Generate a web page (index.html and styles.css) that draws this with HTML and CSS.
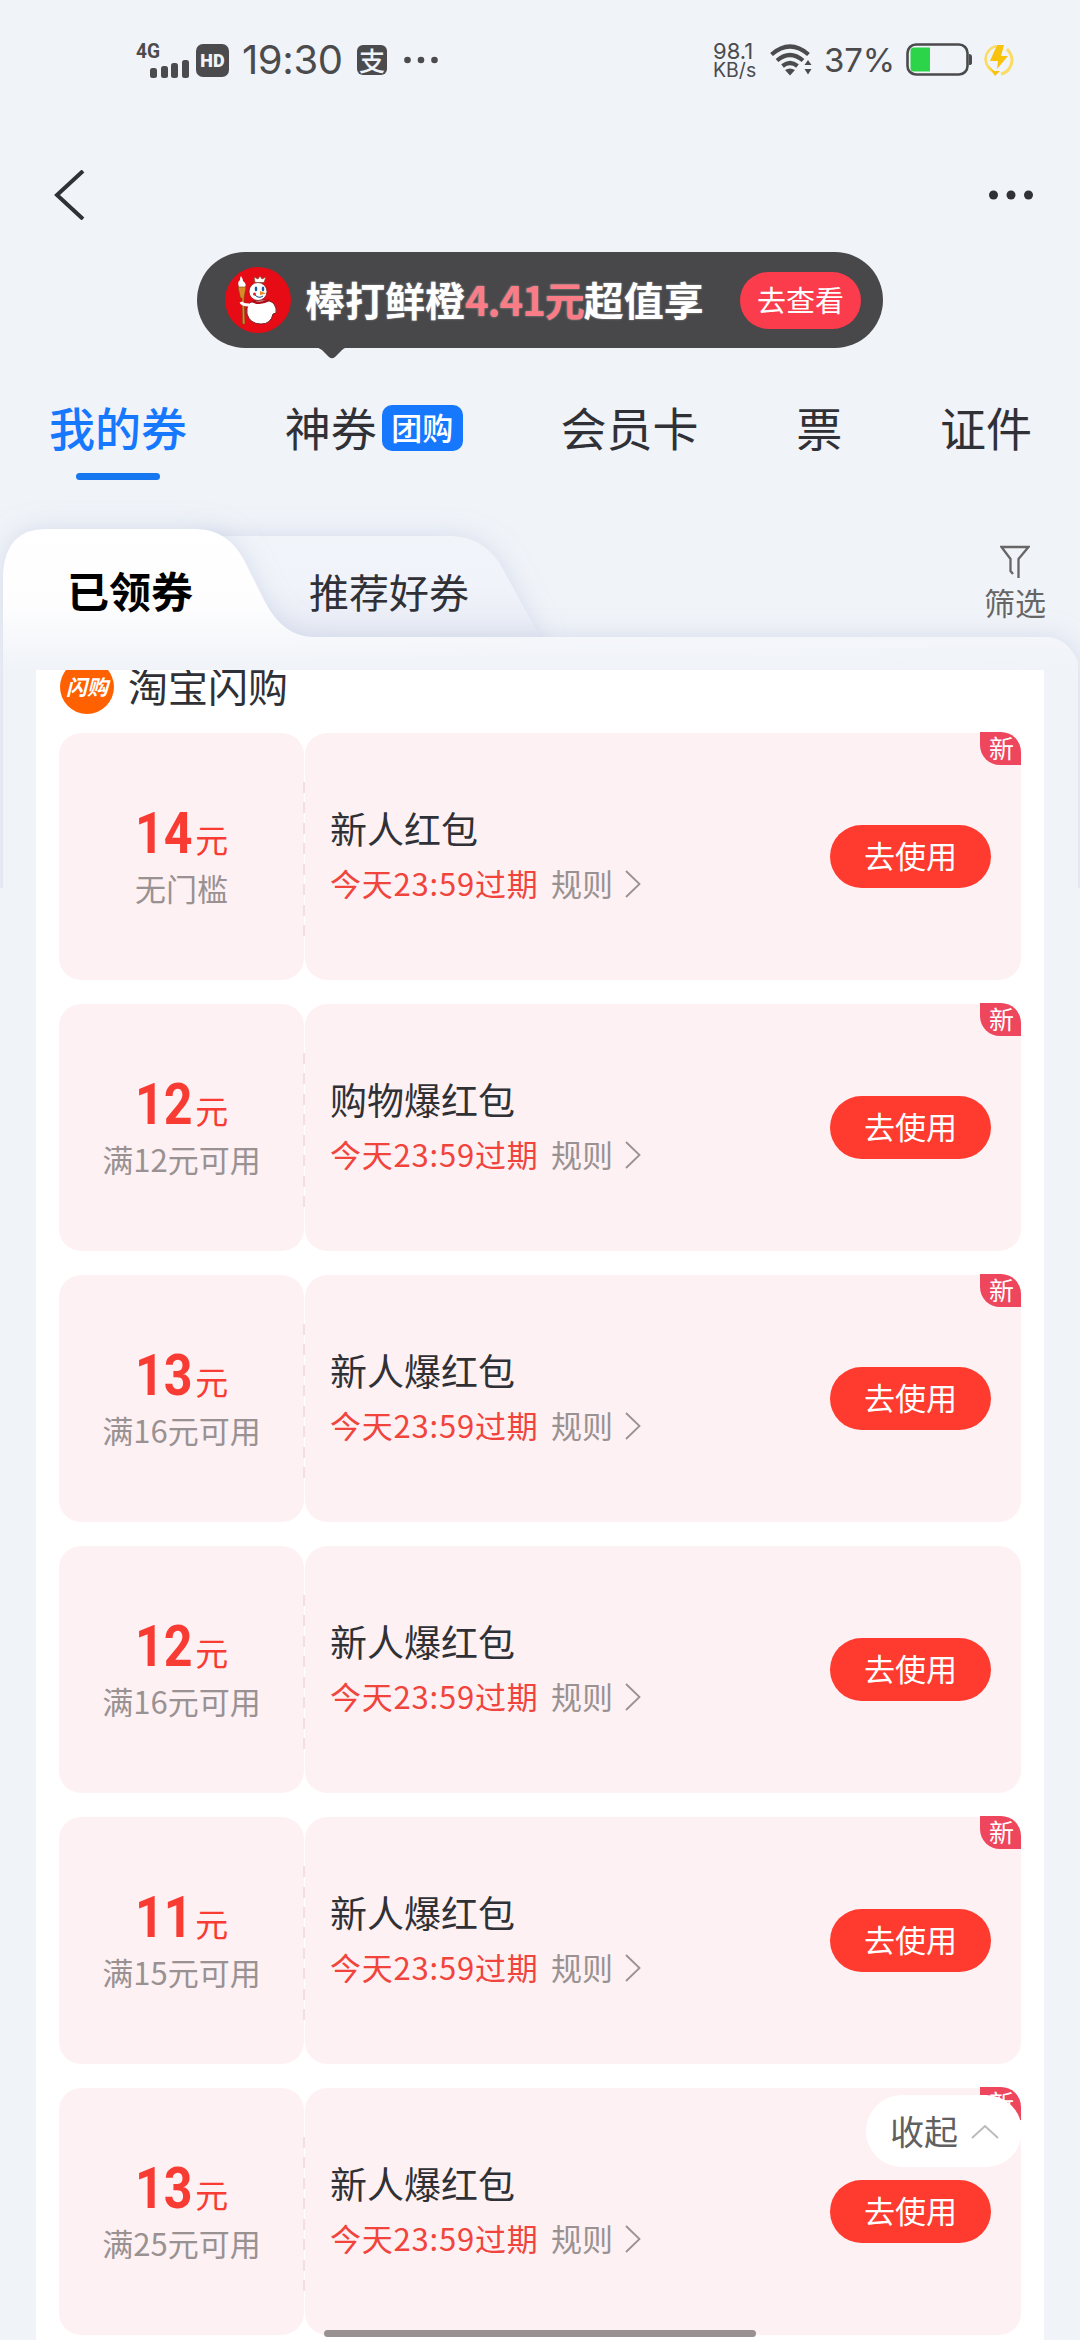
FILE: index.html
```html
<!DOCTYPE html>
<html lang="zh-CN">
<head>
<meta charset="utf-8">
<title>我的券</title>
<link rel="stylesheet" href="styles.css">
</head>
<body>
<svg class="defs" width="0" height="0">
  <symbol id="arrow" viewBox="0 0 16 28"><path d="M1 1 L14.5 14 L1 27" fill="none" stroke="#999192" stroke-width="1.8"/></symbol>
</svg>
<div class="page">
  <header class="status">
    <svg class="signal" width="53" height="44" viewBox="0 -4 53 44">
      <text x="0" y="16" class="net" textLength="24" lengthAdjust="spacingAndGlyphs">4G</text>
      <g fill="#4b4b4d"><rect x="14" y="26" width="7" height="10" rx="2.5"/><rect x="25" y="24" width="7" height="12" rx="2.5"/><rect x="35" y="21" width="7" height="15" rx="2.5"/><rect x="46" y="18" width="7" height="18" rx="2.5"/></g>
    </svg>
    <span class="hd">HD</span>
    <span class="clock">19:30</span>
    <span class="pay">支</span>
    <svg class="dots" width="34" height="8" viewBox="0 0 34 8" fill="#4b4b4d"><circle cx="3.5" cy="4" r="3.3"/><circle cx="17" cy="4" r="3.3"/><circle cx="30.5" cy="4" r="3.3"/></svg>
    <span class="speed"><span class="speed-num">98.1</span><span>KB/s</span></span>
    <svg class="wifi" width="42" height="32" viewBox="0 0 42 32">
      <g fill="none" stroke="#4b4b4d" stroke-width="4.2"><path d="M1.5 10.5 Q20 -5.500 38.500 10.500"/><path d="M7 16.500 Q20 5.500 33 16.500"/><path d="M12.500 22 Q20 16 27.500 22"/></g>
      <path d="M15 26 Q20 23 25 26 L20 31.500 Z" fill="#4b4b4d"/>
      <path d="M34.500 21 L38 16 L41.500 21 Z M34.500 25 L38 30.500 L41.500 25 Z" fill="#4b4b4d"/>
    </svg>
    <span class="percent">37%</span>
    <svg class="battery" width="66" height="34" viewBox="0 0 66 34">
      <rect x="1.500" y="1.500" width="60" height="30" rx="8.500" fill="none" stroke="#4b4b4d" stroke-width="2.600"/>
      <path d="M8 4.500 H24 V28.500 H8 Q4.500 28.500 4.500 25 V8 Q4.500 4.500 8 4.500Z" fill="#2bd449"/>
      <path d="M63 11 Q66 11 66 14 V20 Q66 22 63 22Z" fill="#4b4b4d"/>
    </svg>
    <svg class="flash" width="30" height="33" viewBox="0 0 30 33">
      <path d="M12 2 A14 14 0 0 0 1.500 15 Q2 24 11 29" fill="none" stroke="#fbdc63" stroke-width="2.600"/>
      <path d="M23 5 Q32 15 25 25 Q22 29 17 30" fill="none" stroke="#fbdc63" stroke-width="3"/>
      <path d="M13 1 H20 L17 12 H24 L13 25 L14 17 H6Z M4 21 L11 32 L16 27 L10 27Z" fill="#f9c20c"/>
    </svg>
  </header>
  <nav class="nav">
    <svg width="31" height="50" viewBox="0 0 31 50"><path d="M29 1 L3 25 L29 49" fill="none" stroke="#303136" stroke-width="4"/></svg>
    <svg class="more" width="44" height="10" viewBox="0 0 44 10" fill="#303136"><circle cx="4.500" cy="5" r="4.500"/><circle cx="22" cy="5" r="4.500"/><circle cx="39.500" cy="5" r="4.500"/></svg>
  </nav>
  <section class="promo">
    <svg class="mascot" width="66" height="66" viewBox="0 0 66 66">
      <circle cx="33" cy="33" r="33" fill="#e60b14"/>
      <path d="M24 36 Q30 33 36 33 Q46 33 49 37 Q52 41 51 46 L48 47 Q46 57 36 57 Q25 57 22 47 Q21 41 24 36Z" fill="#fff" stroke="#7c2226" stroke-width="1"/>
      <path d="M27 34 Q35 38 44 33" fill="none" stroke="#b20b18" stroke-width="2.500"/>
      <circle cx="33" cy="24.500" r="9" fill="#fff" stroke="#7c2226" stroke-width=".8"/>
      <path d="M30 15.500 L29 10 L33 12 L35 9 L37 12 L41 10 L39 15.500Z" fill="#fff" stroke="#8c4b30" stroke-width=".8"/>
      <ellipse cx="31" cy="22" rx="1.300" ry="2.400" fill="#1d5aa0"/><ellipse cx="38" cy="22" rx="1.300" ry="2.400" fill="#1d5aa0"/>
      <path d="M35 24 L41 26.500 L35 28Z" fill="#f08a24"/><path d="M30 28 Q34 32 38 29" fill="none" stroke="#1b4b8a"/>
      <circle cx="29.500" cy="27" r="1.500" fill="#e02020"/>
      <path d="M14 20 Q12 15 15 13 Q15 10 16 9 Q18 12 18 14 Q22 17 20 20Z" fill="#fff"/>
      <path d="M13 20 H21 L19 31 L20 57 H17.500 L17 31 H15.500Z" fill="#d98a28" stroke="#7c4a16" stroke-width=".6"/>
      <path d="M16 35 Q17 38 24 38" stroke="#fff" stroke-width="3" fill="none"/>
    </svg>
    <p class="promo-text">棒打鲜橙<em>4.41元</em>超值享</p>
    <a class="promo-btn">去查看</a>
    <svg class="tail" width="36" height="12" viewBox="0 0 36 12"><path d="M0 0 H36 Q31 0 28 3 L21 10 Q18 12.500 15 10 L8 3 Q4 0 0 0Z" fill="#48484a"/></svg>
  </section>
  <nav class="tabs">
    <a class="tab on">我的券</a>
    <a class="tab">神券<span class="tag">团购</span></a>
    <a class="tab">会员卡</a>
    <a class="tab">票</a>
    <a class="tab">证件</a>
  </nav>
  <section class="seg">
    <svg class="seg-bg" width="1080" height="440" viewBox="0 0 1080 440">
      <defs>
        <linearGradient id="front" x1="0" y1="49" x2="0" y2="190" gradientUnits="userSpaceOnUse"><stop offset="0" stop-color="#fff"/><stop offset=".55" stop-color="#fdfdfe"/><stop offset="1" stop-color="#f0f3f8"/></linearGradient>
        <linearGradient id="fade" x1="0" x2="1" y1="0" y2="0"><stop offset="0" stop-color="#f0f3f8" stop-opacity="0"/><stop offset=".35" stop-color="#f0f3f8" stop-opacity=".35"/><stop offset="1" stop-color="#f0f3f8" stop-opacity=".5"/></linearGradient>
        <linearGradient id="back" x1="0" y1="56" x2="0" y2="157" gradientUnits="userSpaceOnUse"><stop offset="0" stop-color="#f1f4f9"/><stop offset=".5" stop-color="#f0f3f9"/><stop offset="1" stop-color="#e7eaf4"/></linearGradient>
        <filter id="soft" x="-10%" y="-50%" width="120%" height="200%"><feDropShadow dx="0" dy="0" stdDeviation="12" flood-color="#b9c3df" flood-opacity=".5"/></filter>
        <clipPath id="top"><rect x="0" y="0" width="1080" height="408"/></clipPath>
        <clipPath id="head"><rect x="0" y="0" width="1080" height="190"/></clipPath>
      </defs>
      <g clip-path="url(#head)">
        <path filter="url(#soft)" d="M200 56 H452 Q481 57 499 82 L540 157 V200 H200Z" fill="url(#back)"/>
      </g>
      <g clip-path="url(#top)">
        <path filter="url(#soft)" d="M3 93 Q6 49 46 49 H197 Q228 50 244 80 L265 122 Q283 156 312 157 H1046 Q1068 158 1078 182 V440 H3Z" fill="url(#front)"/>
      </g>
      <path d="M300 157 H1046 Q1068 158 1078 182 V190 H300Z" fill="url(#fade)"/>
    </svg>
    <a class="seg-tab on">已领券</a>
    <a class="seg-tab">推荐好券</a>
    <a class="filter">
      <svg width="30" height="34" viewBox="0 0 30 34"><path d="M13 29 L10.500 26 V14 L1.500 2 H28.500 L18.500 14 V33" fill="none" stroke="#666" stroke-width="2.300"/></svg>
      <span>筛选</span>
    </a>
  </section>
  <main class="list">
    <h2 class="shop"><span class="shop-logo">闪购</span><span class="shop-name">淘宝闪购</span></h2>
    <article class="coupon">
      <div class="value"><p class="amount"><b>14</b>元</p><p class="limit">无门槛</p></div>
      <div class="info"><div class="detail"><h3>新人红包</h3><p class="rule"><time>今天23:59过期</time><span>规则</span><svg width="16" height="28"><use href="#arrow"/></svg></p></div><a class="use">去使用</a><i class="new">新</i></div>
    </article>
    <article class="coupon">
      <div class="value"><p class="amount"><b>12</b>元</p><p class="limit">满12元可用</p></div>
      <div class="info"><div class="detail"><h3>购物爆红包</h3><p class="rule"><time>今天23:59过期</time><span>规则</span><svg width="16" height="28"><use href="#arrow"/></svg></p></div><a class="use">去使用</a><i class="new">新</i></div>
    </article>
    <article class="coupon">
      <div class="value"><p class="amount"><b>13</b>元</p><p class="limit">满16元可用</p></div>
      <div class="info"><div class="detail"><h3>新人爆红包</h3><p class="rule"><time>今天23:59过期</time><span>规则</span><svg width="16" height="28"><use href="#arrow"/></svg></p></div><a class="use">去使用</a><i class="new">新</i></div>
    </article>
    <article class="coupon">
      <div class="value"><p class="amount"><b>12</b>元</p><p class="limit">满16元可用</p></div>
      <div class="info"><div class="detail"><h3>新人爆红包</h3><p class="rule"><time>今天23:59过期</time><span>规则</span><svg width="16" height="28"><use href="#arrow"/></svg></p></div><a class="use">去使用</a></div>
    </article>
    <article class="coupon">
      <div class="value"><p class="amount"><b>11</b>元</p><p class="limit">满15元可用</p></div>
      <div class="info"><div class="detail"><h3>新人爆红包</h3><p class="rule"><time>今天23:59过期</time><span>规则</span><svg width="16" height="28"><use href="#arrow"/></svg></p></div><a class="use">去使用</a><i class="new">新</i></div>
    </article>
    <article class="coupon">
      <div class="value"><p class="amount"><b>13</b>元</p><p class="limit">满25元可用</p></div>
      <div class="info"><div class="detail"><h3>新人爆红包</h3><p class="rule"><time>今天23:59过期</time><span>规则</span><svg width="16" height="28"><use href="#arrow"/></svg></p></div><a class="use">去使用</a><i class="new">新</i></div>
    </article>
  </main>
  <a class="fold">收起<svg width="28" height="15" viewBox="0 0 28 15"><path d="M1 14 L14 2 L27 14" fill="none" stroke="#bbb" stroke-width="2"/></svg></a>
  <div class="home"></div>
</div>
</body>
</html>
```
FILE: styles.css
```css
* { box-sizing: border-box; margin: 0; padding: 0; }
body { font-family: "Noto Sans CJK SC", sans-serif; color: #303136; }
.defs { position: absolute; }
.page { position: relative; width: 1080px; height: 2340px; overflow: hidden; background: #f0f3f8; display: flex; flex-direction: column; }

.status { height: 120px; padding: 0 66px 0 136px; display: flex; align-items: center; color: #4b4b4d; font-family: Inter, "Noto Sans CJK SC", sans-serif; flex: none; }
.net { font: 700 20px Roboto, sans-serif; fill: #4b4b4d; }
.hd { width: 33px; height: 33px; margin-left: 7px; border-radius: 7px; background: #4b4b4d; color: #f0f3f8; font: 900 18px/33px Roboto, sans-serif; text-align: center; }
.clock { width: 100px; margin-left: 13px; font-size: 40px; line-height: 48px; letter-spacing: -0.4px; white-space: nowrap; }
.pay { width: 30px; height: 30px; margin-left: 15px; border-radius: 6px; background: #4b4b4d; color: #f0f3f8; font: 500 26px/29px "Noto Sans CJK SC", sans-serif; text-align: center; }
.dots { margin-left: 17px; }
.speed { margin-left: auto; display: flex; flex-direction: column; font-size: 19.5px; line-height: 19px; width: 46px; }
.speed-num { font-size: 22px; line-height: 20px; }
.wifi { margin-left: 11px; }
.percent { margin-left: 12px; width: 70px; font-size: 33px; letter-spacing: -0.2px; white-space: nowrap; }
.battery { margin-left: 12px; }
.flash { margin-left: 12px; }

.nav { flex: none; height: 132px; padding: 50px 47px 0 54px; display: flex; justify-content: space-between; }
.more { margin-top: 20px; }

.promo { position: relative; flex: none; width: 686px; height: 96px; margin-left: 197px; padding: 0 22px 0 28px; border-radius: 48px; background: #48484a; display: flex; align-items: center; }
.promo-text { margin: -2px 0 0 14px; font-size: 40px; font-weight: 700; color: #fff; white-space: nowrap; text-shadow: 0 0 2px rgba(255,255,255,.5); }
.promo-text em { font-style: normal; color: #fa7c86; letter-spacing: -1px; }
.promo-btn { margin-left: auto; width: 121px; height: 57px; border-radius: 29px; background: #fb3c4c; color: #fff; font-size: 29px; line-height: 55px; text-align: center; }
.tail { position: absolute; left: 117px; top: 95px; }

.tabs { flex: none; height: 162px; padding: 55px 48px 0 49px; display: flex; align-items: flex-start; justify-content: space-between; font-size: 46px; line-height: 46px; }
.tab { display: flex; align-items: center; }
.tab.on { flex-direction: column; gap: 24px; color: #1677ff; font-weight: 500; }
.tab.on::after { content: ""; width: 84px; height: 7px; border-radius: 4px; background: #1677f0; }
.tag { width: 81px; height: 46px; margin: 2px 0 -2px 5px; border-radius: 10px; background: #1677ff; color: #fff; font-size: 31px; font-weight: 500; line-height: 43px; text-align: center; }

.seg { position: relative; flex: none; height: 160px; padding: 35px 34px 0 67px; display: flex; align-items: flex-start; }
.seg-bg { position: absolute; left: 0; top: -30px; }
.seg-tab { position: relative; margin-top: 26px; font-size: 40px; line-height: 40px; }
.seg-tab.on { width: 242px; margin-top: 25px; font-size: 42px; font-weight: 700; color: #000; }
.filter { position: relative; margin-left: auto; display: flex; flex-direction: column; align-items: center; gap: 6px; font-size: 31px; line-height: 34px; color: #666; }

.list { position: relative; flex: none; height: 1670px; margin: 0 36px; padding: 0 23px; background: #fff; overflow: hidden; display: flex; flex-direction: column; }
.shop { flex: none; height: 54px; margin: -10px 0 19px; display: flex; align-items: center; gap: 14px; font-size: 40px; font-weight: 400; }
.shop-name { line-height: 54px; margin-top: -4px; }
.shop-logo { width: 54px; height: 54px; margin-left: 1px; border-radius: 50%; background: #ff6000; color: #fff; font-size: 21px; font-weight: 700; line-height: 52px; text-align: center; font-style: italic; }
.coupon { position: relative; flex: none; display: flex; gap: 1px; height: 247px; margin-bottom: 24px; }
.coupon::after { content: ""; position: absolute; left: 244px; top: 49px; width: 2px; height: 155px; background: repeating-linear-gradient(#f2dfe3 0 11px, transparent 11px 20.5px); }
.value { width: 245px; border-radius: 22px; background: #fef1f3; display: flex; flex-direction: column; align-items: center; padding-top: 69px; }
.amount { font-size: 33px; line-height: 64px; color: #f83c33; display: flex; align-items: baseline; font-weight: 400; }
.amount b { display: block; font-family: Roboto, sans-serif; font-size: 57px; transform: scaleX(.88); transform-origin: 0 0; margin-right: -5px; }
.limit { font-size: 31px; line-height: 42px; color: #999192; margin-top: -4px; }
.info { position: relative; flex: 1; border-radius: 22px; background: #fef1f3; padding: 0 30px 0 25px; display: flex; justify-content: space-between; }
.detail { padding-top: 70px; }
.detail h3 { font-size: 37px; font-weight: 400; line-height: 50px; }
.rule { display: flex; align-items: center; margin-top: 8px; font-size: 31px; line-height: 44px; color: #999192; }
.rule time { color: #f0443d; width: 206px; letter-spacing: .8px; white-space: nowrap; }
.rule span { margin: 0 12px 0 15px; }
.rule svg { margin-top: 2px; }
.use { width: 161px; height: 63px; margin-top: 92px; border-radius: 32px; background: #ff3b30; color: #fff; font-size: 31px; line-height: 60px; text-align: center; }
.new { position: absolute; right: 0; top: -1px; width: 41px; height: 33px; border-radius: 0 20px 0 20px; background: #ee475d; color: #fff; font-size: 25px; font-style: normal; line-height: 31px; text-align: center; padding-left: 2px; }

.fold { position: absolute; left: 866px; top: 2095px; width: 156px; height: 72px; padding-left: 24px; border-radius: 36px; background: #fff; color: #606060; font-size: 34px; line-height: 70px; display: flex; align-items: center; gap: 13px; }
.home { position: absolute; left: 324px; top: 2330px; width: 432px; height: 7px; border-radius: 4px; background: #999091; }
```
